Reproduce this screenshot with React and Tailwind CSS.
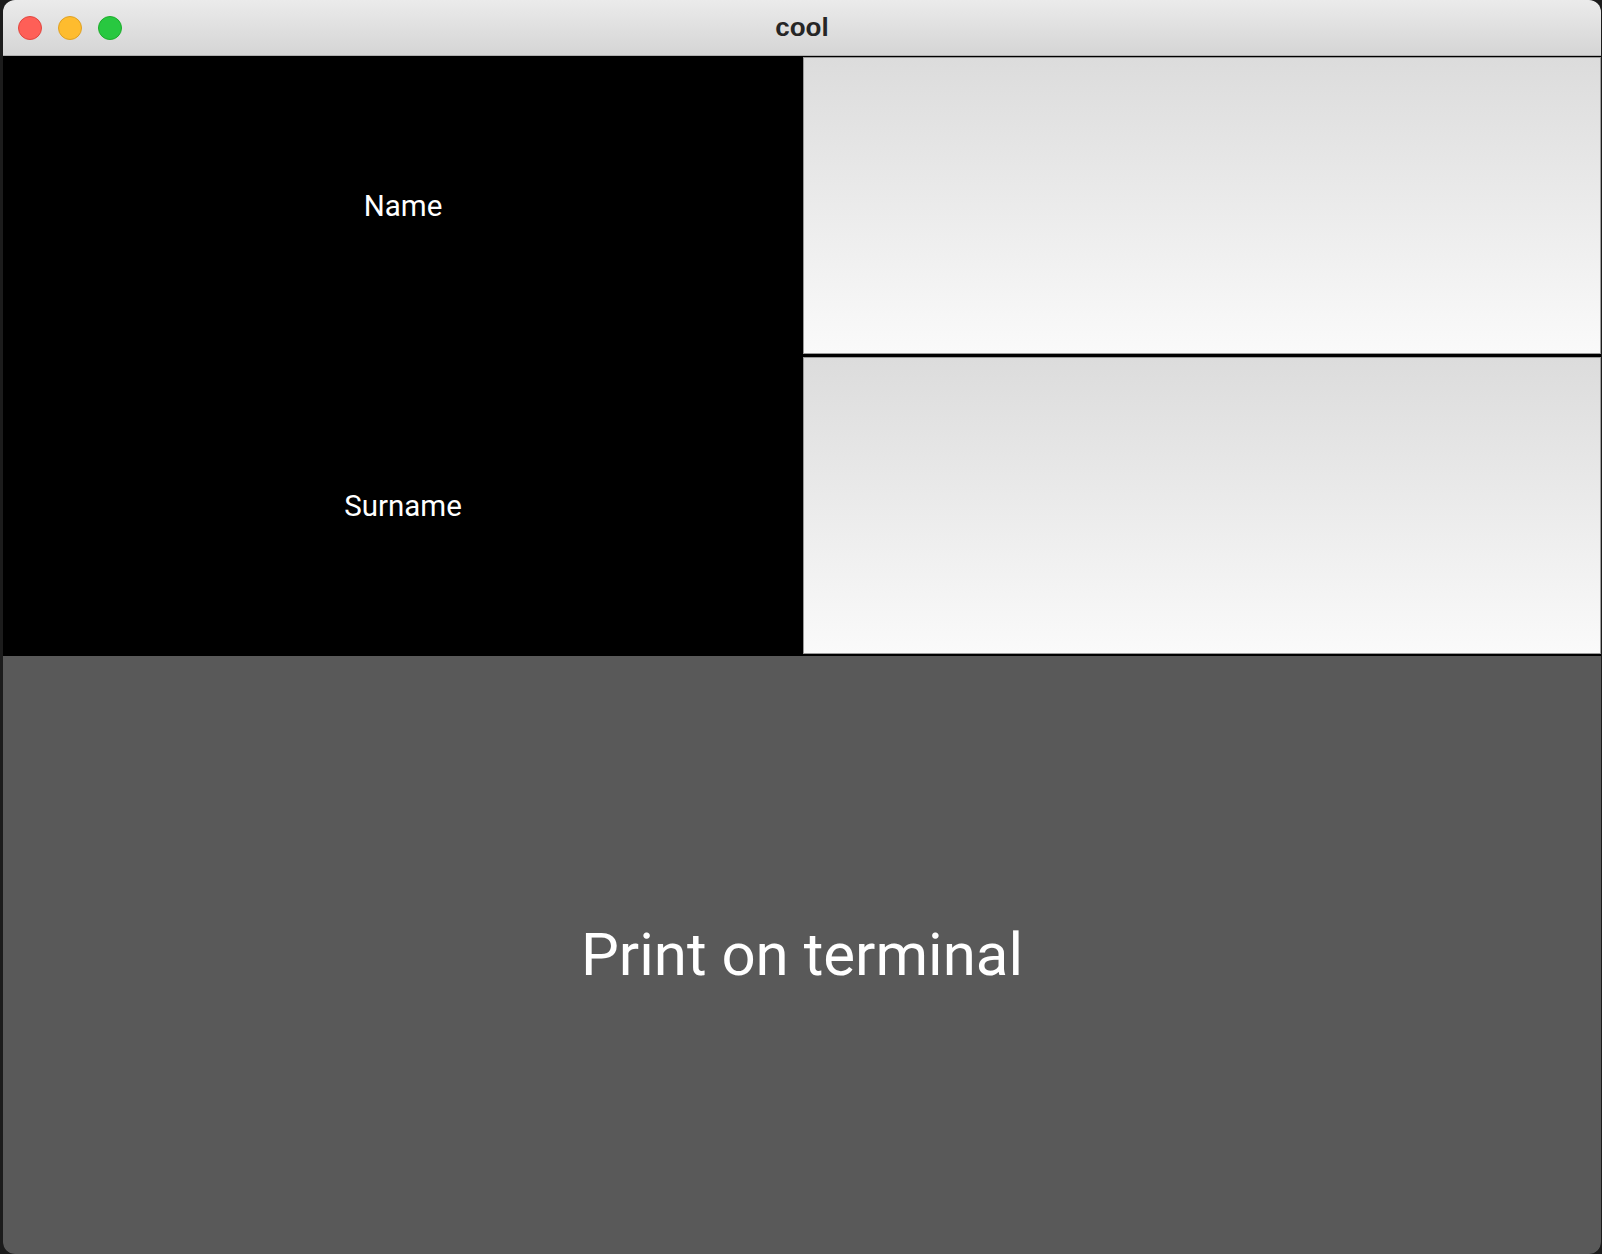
export default function App() {
  return (
    <div className="w-[1602px] h-[1254px] bg-[#1c1c1c] pl-[3px] pr-[1px] overflow-hidden">
      <div className="w-full h-full flex flex-col rounded-t-[12px] rounded-b-[12px] overflow-hidden bg-black">
        {/* Title bar */}
        <div className="relative h-[56px] shrink-0 bg-gradient-to-b from-[#ebebeb] to-[#d5d5d5] border-b border-[#b0b0b0] flex items-center justify-center pb-[2px]">
          <div className="absolute left-[15px] top-[16px] flex gap-[16px]">
            <div className="w-[24px] h-[24px] rounded-full bg-[#fe5f57] border border-[#e2463f]" />
            <div className="w-[24px] h-[24px] rounded-full bg-[#febc2e] border border-[#dfa123]" />
            <div className="w-[24px] h-[24px] rounded-full bg-[#28c840] border border-[#1dad2b]" />
          </div>
          <span className="text-[26px] font-bold text-[#262626] leading-none font-['Liberation_Sans',Arial,sans-serif]">cool</span>
        </div>
        {/* Top grid */}
        <div className="h-[600px] shrink-0 grid grid-cols-[800px_1fr] bg-black">
          <div className="flex flex-col font-['Roboto',sans-serif] text-white text-[29.5px]">
            <div className="flex-1 flex items-center justify-center">Name</div>
            <div className="flex-1 flex items-center justify-center">Surname</div>
          </div>
          <div className="flex flex-col gap-[3px] pt-[1px] pb-[2px] bg-black">
            <div className="flex-1 border border-[#9a9a9a] bg-gradient-to-b from-[#dcdcdc] to-[#fafafa]" />
            <div className="flex-1 border border-[#9a9a9a] bg-gradient-to-b from-[#dcdcdc] to-[#fafafa]" />
          </div>
        </div>
        {/* Button */}
        <div className="flex-1 bg-[#595959] flex items-center justify-center">
          <span className="text-white text-[60px] font-['Roboto',sans-serif] leading-none">Print on terminal</span>
        </div>
      </div>
    </div>
  );
}
